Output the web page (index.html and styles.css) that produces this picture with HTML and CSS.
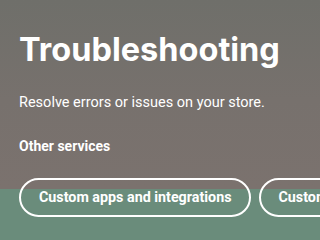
FILE: index.html
```html
<!DOCTYPE html>
<html lang="en">
<head>
  <meta charset="UTF-8" />
  <meta name="viewport" content="width=device-width, initial-scale=1.0"/>
  <title>Troubleshooting</title>
  <link rel="stylesheet" href="styles.css">
</head>
<body>

<section class="hero">
  <h1>Troubleshooting</h1>
  <p class="lead">Resolve errors or issues on your store.</p>
  <h2>Other services</h2>
  <div class="services">
    <a class="pill" href="#">Custom apps and integrations</a>
    <a class="pill" href="#">Custom themes</a>
  </div>
</section>

</body>
</html>
```

FILE: styles.css
```css
body {
  margin: 0;
  font-family: Roboto, "Noto Sans", sans-serif;
  color: #fff;
  background: #6a8c7b;
  overflow: hidden;
}

.hero {
  height: 240px;
  padding: 30px 0 0 19px;
  box-sizing: border-box;
  background: linear-gradient(to bottom, #6f6f6a 0, #77716d 100px, #7b726e 189px, #6a8c7b 189px);
}

h1 {
  margin: 0;
  font-family: Inter, Roboto, sans-serif;
  font-size: 32.5px;
  line-height: 40px;
  font-weight: 700;
}

.lead {
  margin: 22px 0 0;
  font-size: 14.5px;
  line-height: 22px;
}

h2 {
  margin: 21px 0 0;
  font-size: 14px;
  line-height: 22px;
  font-weight: 700;
}

.services {
  display: flex;
  gap: 8px;
  margin-top: 21px;
  white-space: nowrap;
}

.pill {
  flex: none;
  display: block;
  padding: 0 17px 0 18px;
  height: 39px;
  line-height: 35px;
  border: 2px solid #fff;
  border-radius: 20px;
  box-sizing: border-box;
  color: #fff;
  text-decoration: none;
  font-size: 14.3px;
  font-weight: 700;
}
```
